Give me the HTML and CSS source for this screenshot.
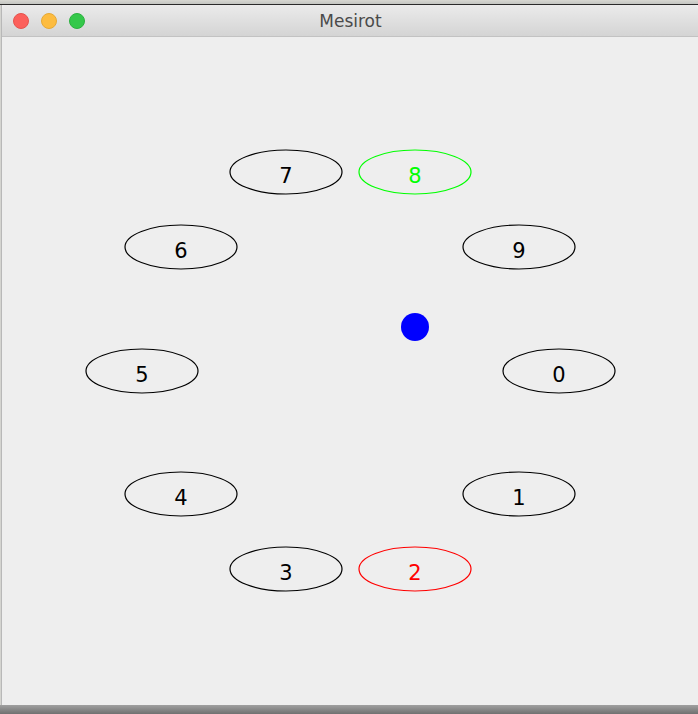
FILE: index.html
```html
<!DOCTYPE html>
<html>
<head>
<meta charset="utf-8">
<title>Mesirot</title>
<link rel="stylesheet" href="styles.css">
</head>
<body>
<div class="desktop"></div>
<div class="window">
  <div class="titlebar">
    <div class="lights">
      <span class="light red"></span>
      <span class="light yellow"></span>
      <span class="light green"></span>
    </div>
    <div class="title">Mesirot</div>
  </div>
  <div class="content">
    <svg class="canvas" width="696" height="668" viewBox="2 37 696 668" xmlns="http://www.w3.org/2000/svg">
      <g class="node"><ellipse cx="286" cy="172" rx="56" ry="22"/><text x="286" y="182.5">7</text></g>
      <g class="node green-node"><ellipse cx="415" cy="172" rx="56" ry="22"/><text x="415" y="182.5">8</text></g>
      <g class="node"><ellipse cx="181" cy="247" rx="56" ry="22"/><text x="181" y="257.5">6</text></g>
      <g class="node"><ellipse cx="519" cy="247" rx="56" ry="22"/><text x="519" y="257.5">9</text></g>
      <g class="node"><ellipse cx="142" cy="371" rx="56" ry="22"/><text x="142" y="381.5">5</text></g>
      <g class="node"><ellipse cx="559" cy="371" rx="56" ry="22"/><text x="559" y="381.5">0</text></g>
      <g class="node"><ellipse cx="181" cy="494" rx="56" ry="22"/><text x="181" y="504.5">4</text></g>
      <g class="node"><ellipse cx="519" cy="494" rx="56" ry="22"/><text x="519" y="504.5">1</text></g>
      <g class="node"><ellipse cx="286" cy="569" rx="56" ry="22"/><text x="286" y="579.5">3</text></g>
      <g class="node red-node"><ellipse cx="415" cy="569" rx="56" ry="22"/><text x="415" y="579.5">2</text></g>
      <circle class="ball" cx="415" cy="327" r="14"/>
    </svg>
  </div>
</div>
<div class="shadow"></div>
</body>
</html>
```
FILE: styles.css
```css
html, body {
  margin: 0;
  padding: 0;
  width: 698px;
  height: 714px;
  overflow: hidden;
  background: #d4d4d0;
}
.desktop {
  height: 4px;
  background: linear-gradient(#d8d8d2, #c4c6c2);
  border-bottom: 1px solid #2a2a2a;
}
.window {
  margin-left: 1px;
  width: 697px;
  background: #eeeeee;
  border-left: 1px solid #b8b8b8;
  box-sizing: border-box;
}
.titlebar {
  position: relative;
  height: 31px;
  background: linear-gradient(#ebebeb, #d4d4d4);
  border-bottom: 1px solid #c2c2c2;
  border-radius: 5px 5px 0 0;
  display: flex;
  align-items: center;
  justify-content: center;
}
.lights {
  position: absolute;
  left: 11px;
  top: 8px;
  display: flex;
  gap: 12px;
}
.light {
  width: 16px;
  height: 16px;
  border-radius: 50%;
  display: block;
  box-sizing: border-box;
}
.red { background: #fc605b; border: 1px solid #e5534e; }
.yellow { background: #fdbc40; border: 1px solid #e6a935; }
.green { background: #34c84a; border: 1px solid #2bb13f; }
.title {
  font-family: "DejaVu Sans", "Liberation Sans", sans-serif;
  font-size: 17px;
  color: #4a4a4a;
  margin-left: 1px;
  margin-top: 1px;
}
.content {
  height: 668px;
  background: #eeeeee;
}
.canvas {
  display: block;
}
.node ellipse {
  fill: none;
  stroke: #000000;
  stroke-width: 1.2;
}
.node text {
  font-family: "DejaVu Sans", "Liberation Sans", sans-serif;
  font-size: 21px;
  fill: #000000;
  text-anchor: middle;
}
.green-node ellipse { stroke: #00ff00; }
.green-node text { fill: #00ff00; }
.red-node ellipse { stroke: #ff0000; }
.red-node text { fill: #ff0000; }
.ball { fill: #0000ff; }
.shadow {
  height: 9px;
  background: linear-gradient(#a0a0a0, #707070);
}
```
